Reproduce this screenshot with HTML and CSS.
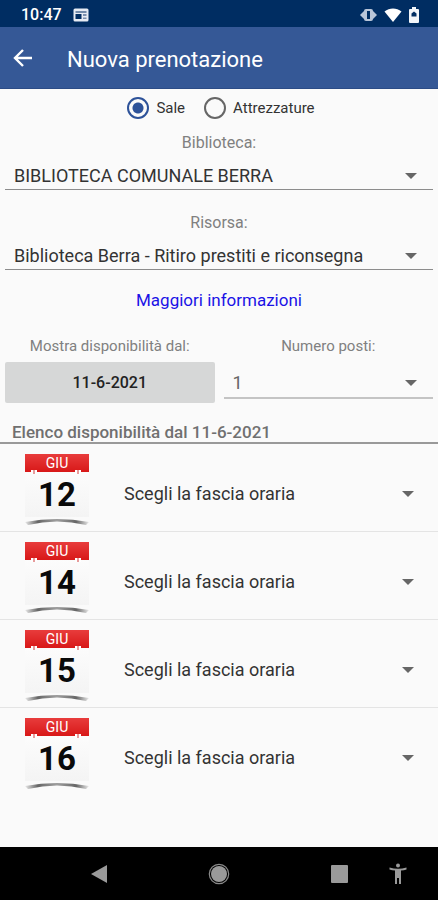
FILE: index.html
```
<!DOCTYPE html>
<html lang="it">
<head>
  <meta charset="UTF-8">
  <meta name="viewport" content="width=device-width, initial-scale=1.0">
  <title>Nuova prenotazione</title>
  <link rel="stylesheet" href="styles.css">
</head>
<body>
  <div class="status-bar">
    <span class="clock">10:47</span>
    <svg class="news-icon" width="16" height="14" viewBox="0 0 16 14">
      <rect x="0.5" y="0.5" width="15" height="13" rx="1.5" fill="#e6ebf3"/>
      <path d="M2.500 3.500h11v1h-11zM2.500 6h6v5h-6z" fill="#002d62"/>
      <path d="M10 6h3.500v2H10zM10 9.500h3.500V11H10z" fill="#7b8fae"/>
    </svg>
    <div class="status-icons">
      <svg width="17" height="14" viewBox="0 0 17 14">
        <path d="M0 7l4-4v8zM17 7l-4-4v8z" fill="#b9c6d9"/>
        <rect x="4" y="1" width="9" height="12" rx="2" fill="#b9c6d9"/>
        <rect x="7" y="3" width="3" height="8" fill="#002d62"/>
      </svg>
      <svg width="18" height="14" viewBox="0 0 18 14">
        <path d="M0.500 3.500C5.500-0.500 12.500-0.500 17.500 3.500L9 14z" fill="#fff"/>
      </svg>
      <svg width="10" height="16" viewBox="0 0 10 16">
        <path d="M3 0h4v2h2q1 0 1 1v12q0 1-1 1H1q-1 0-1-1V3q0-1 1-1h2z" fill="#f2f5f9"/>
        <path d="M2.500 9.500V6.500L5 4.500 7.500 6.500v3z" fill="#002d62"/>
      </svg>
    </div>
  </div>

  <header class="toolbar">
    <button class="back-btn" type="button" aria-label="Indietro">
      <svg width="20" height="20" viewBox="0 0 20 20">
        <path d="M19 10H2.500M10 2L2 10l8 8" fill="none" stroke="#fff" stroke-width="2.400"/>
      </svg>
    </button>
    <h1>Nuova prenotazione</h1>
  </header>

  <main>
    <div class="type-group">
      <label><input type="radio" name="tipo" checked>Sale</label>
      <label><input type="radio" name="tipo">Attrezzature</label>
    </div>

    <div class="field">
      <label for="biblioteca">Biblioteca:</label>
      <div class="select">
        <select id="biblioteca"><option>BIBLIOTECA COMUNALE BERRA</option></select>
      </div>
    </div>

    <div class="field">
      <label for="risorsa">Risorsa:</label>
      <div class="select">
        <select id="risorsa"><option>Biblioteca Berra - Ritiro prestiti e riconsegna</option></select>
      </div>
    </div>

    <a class="more-info" href="#">Maggiori informazioni</a>

    <div class="filters">
      <div class="filter">
        <label for="data">Mostra disponibilità dal:</label>
        <button class="date-btn" id="data" type="button">11-6-2021</button>
      </div>
      <div class="filter">
        <label for="posti">Numero posti:</label>
        <div class="select seats">
          <select id="posti"><option>1</option></select>
        </div>
      </div>
    </div>

    <h2>Elenco disponibilità dal 11-6-2021</h2>

    <!-- curled shadow under every calendar page -->
    <svg width="0" height="0" class="defs">
      <defs>
        <linearGradient id="curl-fade">
          <stop offset="0" stop-color="#555" stop-opacity="0.100"/>
          <stop offset="0.200" stop-color="#555" stop-opacity="0.900"/>
          <stop offset="0.500" stop-color="#777" stop-opacity="0.700"/>
          <stop offset="0.800" stop-color="#555" stop-opacity="0.900"/>
          <stop offset="1" stop-color="#555" stop-opacity="0.100"/>
        </linearGradient>
        <symbol id="curl" viewBox="0 0 64 7" preserveAspectRatio="none">
          <path d="M0 4Q32-2 64 4L61 7Q32 0 3 7z" fill="url(#curl-fade)"/>
        </symbol>
      </defs>
    </svg>

    <ul class="days">
      <li>
        <div class="calendar">
          <span class="month">GIU</span>
          <span class="day">12</span>
          <svg class="curl"><use href="#curl"/></svg>
        </div>
        <div class="select slot">
          <select aria-label="Fascia oraria 12 giugno"><option>Scegli la fascia oraria</option></select>
        </div>
      </li>
      <li>
        <div class="calendar">
          <span class="month">GIU</span>
          <span class="day">14</span>
          <svg class="curl"><use href="#curl"/></svg>
        </div>
        <div class="select slot">
          <select aria-label="Fascia oraria 14 giugno"><option>Scegli la fascia oraria</option></select>
        </div>
      </li>
      <li>
        <div class="calendar">
          <span class="month">GIU</span>
          <span class="day">15</span>
          <svg class="curl"><use href="#curl"/></svg>
        </div>
        <div class="select slot">
          <select aria-label="Fascia oraria 15 giugno"><option>Scegli la fascia oraria</option></select>
        </div>
      </li>
      <li>
        <div class="calendar">
          <span class="month">GIU</span>
          <span class="day">16</span>
          <svg class="curl"><use href="#curl"/></svg>
        </div>
        <div class="select slot">
          <select aria-label="Fascia oraria 16 giugno"><option>Scegli la fascia oraria</option></select>
        </div>
      </li>
    </ul>
  </main>

  <nav class="nav-bar">
    <button type="button" aria-label="Indietro">
      <svg width="22" height="22" viewBox="0 0 22 22"><path d="M19 2v18L3 11z"/></svg>
    </button>
    <button type="button" aria-label="Home">
      <svg width="22" height="22" viewBox="0 0 22 22">
        <circle cx="11" cy="11" r="8"/>
        <circle cx="11" cy="11" r="9.700" fill="none" stroke="#8a8a8a" stroke-width="1.200"/>
      </svg>
    </button>
    <button type="button" aria-label="Recenti">
      <svg width="22" height="22" viewBox="0 0 22 22"><rect x="2" y="2" width="17" height="18" rx="1"/></svg>
    </button>
    <button class="accessibility" type="button" aria-label="Accessibilità">
      <svg width="18" height="22" viewBox="0 0 18 22">
        <circle cx="9" cy="2.500" r="2"/>
        <path d="M0.500 4.500Q9 7 17.500 4.500v2Q15 7.500 12 7.500V21h-2v-6H8v6H6V7.500Q3 7.500 0.500 6.500z"/>
      </svg>
    </button>
  </nav>
</body>
</html>
```

FILE: styles.css
```
* {
  margin: 0;
  padding: 0;
  box-sizing: border-box;
  font-family: Roboto, sans-serif;
}

body {
  display: flex;
  flex-direction: column;
  min-height: 100vh;
  background: #fafafa;
  color: #333;
}

button {
  border: none;
  background: none;
  cursor: pointer;
}

svg {
  display: block;
}

/* top bars */
.status-bar {
  display: flex;
  align-items: center;
  height: 27px;
  padding: 2px 19px 0 21px;
  background: #002d62;
}

.clock {
  font-size: 16px;
  font-weight: 500;
  color: #fff;
}

.news-icon {
  margin-left: 11px;
}

.status-icons {
  display: flex;
  align-items: center;
  gap: 7px;
  margin-left: auto;
}

.toolbar {
  display: flex;
  align-items: center;
  gap: 34px;
  height: 62px;
  padding: 0 13px;
  background: #355896;
  border-bottom: 1px solid #2c4c86;
}

h1 {
  padding-top: 4px;
  font-size: 22px;
  font-weight: 400;
  color: #fff;
}

main {
  flex: 1;
}

/* form */
.type-group {
  display: flex;
  justify-content: center;
  gap: 19px;
  height: 38px;
  padding-left: 4px;
}

.type-group label {
  display: flex;
  align-items: center;
  gap: 7px;
  font-size: 15px;
}

input[type="radio"] {
  appearance: none;
  width: 22px;
  height: 22px;
  border: 2px solid #666;
  border-radius: 50%;
}

input[type="radio"]:checked {
  border-color: #2d5299;
  background: radial-gradient(circle, #2d5299 5px, transparent 6px);
}

.field {
  padding: 6px 5px 17px;
}

.field label, .filter label {
  display: block;
  font-size: 16px;
  line-height: 20px;
  text-align: center;
  color: #808080;
}

.select {
  position: relative;
  height: 37px;
  border-bottom: 1px solid #8c8c8c;
}

.select select {
  appearance: none;
  width: 100%;
  height: 100%;
  padding: 9px 36px 0 9px;
  border: none;
  outline: none;
  background: transparent;
  font-size: 18px;
  color: #333;
}

.select::after {
  content: '';
  position: absolute;
  top: 20px;
  right: 16px;
  border: 6px solid transparent;
  border-top-color: #666;
  border-bottom: none;
  pointer-events: none;
}

.more-info {
  display: block;
  width: fit-content;
  margin: 3px auto 26px;
  font-size: 17px;
  line-height: 20px;
  color: #1a12e6;
  text-decoration: none;
}

.filters {
  display: grid;
  grid-template-columns: 1fr 1fr;
  gap: 9px;
  padding: 0 5px;
}

.filter label {
  margin-bottom: 6px;
  font-size: 15px;
}

.date-btn {
  width: 100%;
  height: 41px;
  border-radius: 2px;
  background: #d6d7d7;
  font-size: 16px;
  font-weight: 500;
  color: #222;
}

.seats {
  border-bottom: 2px solid #c4c4c4;
}

.seats select {
  padding-top: 5px;
  color: #666;
}

.seats::after {
  top: 18px;
}

/* availability list */
h2 {
  margin-top: 19px;
  padding-left: 12px;
  border-bottom: 2px solid #999;
  font-size: 17px;
  font-weight: 500;
  line-height: 20px;
  color: #707070;
}

.defs {
  position: absolute;
}

.days {
  list-style: none;
}

.days li {
  display: flex;
  align-items: center;
  gap: 26px;
  padding: 10px 14px 6px 25px;
  border-bottom: 1px solid #e4e4e4;
}

.days li:last-child {
  border-bottom: none;
}

.calendar {
  width: 64px;
  background: linear-gradient(#fff, #f4f4f4 63px, transparent 63px);
}

.month {
  display: block;
  position: relative;
  background: linear-gradient(#e83c3c, #d81818);
  font-size: 14px;
  line-height: 18px;
  text-align: center;
  color: #fff;
}

/* binding rings of the calendar page */
.month::before, .month::after {
  content: '';
  position: absolute;
  bottom: -2px;
  width: 6px;
  height: 4px;
  background: repeating-linear-gradient(90deg, #fff 0 2px, #e79c9c 2px 4px);
}

.month::before {
  left: 6px;
}

.month::after {
  right: 8px;
}

.day {
  display: block;
  font-size: 33px;
  font-weight: 700;
  line-height: 46px;
  text-align: center;
  color: #0a0a0a;
}

.curl {
  width: 100%;
  height: 7px;
}

.slot {
  flex: 1;
  border-bottom: none;
}

.slot select {
  padding-top: 8px;
}

.slot::after {
  right: 10px;
}

/* system navigation */
.nav-bar {
  display: flex;
  align-items: center;
  justify-content: space-between;
  height: 53px;
  padding: 0 31px 0 88px;
  background: #000;
}

.nav-bar svg {
  fill: #9a9a9a;
}

.nav-bar .accessibility {
  margin-left: -60px;
}
```
